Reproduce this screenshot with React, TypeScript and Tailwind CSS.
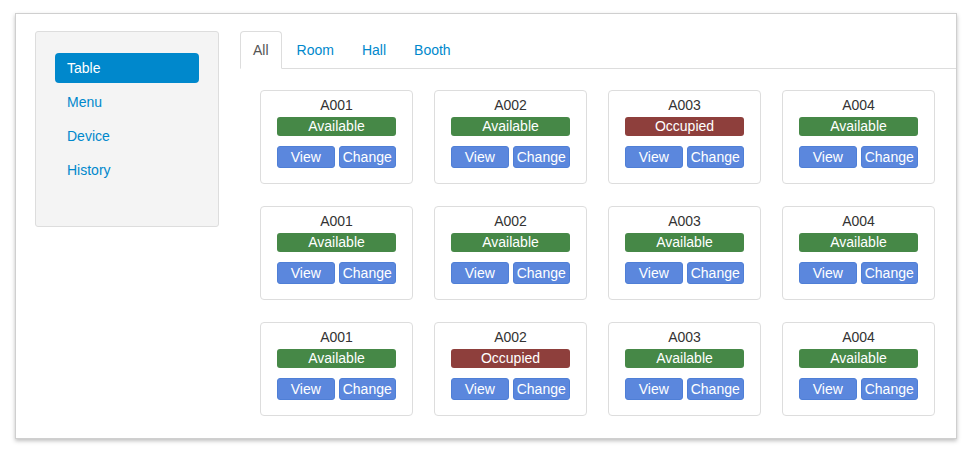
import { useState } from "react";

type Table = { code: string; occupied: boolean };

const rows: Table[][] = [
  [
    { code: "A001", occupied: false },
    { code: "A002", occupied: false },
    { code: "A003", occupied: true },
    { code: "A004", occupied: false },
  ],
  [
    { code: "A001", occupied: false },
    { code: "A002", occupied: false },
    { code: "A003", occupied: false },
    { code: "A004", occupied: false },
  ],
  [
    { code: "A001", occupied: false },
    { code: "A002", occupied: true },
    { code: "A003", occupied: false },
    { code: "A004", occupied: false },
  ],
];

const navItems = ["Table", "Menu", "Device", "History"];
const tabs = ["All", "Room", "Hall", "Booth"];

function TableCard({ table }: { table: Table }) {
  return (
    <div className="w-[153px] h-[94px] border border-[#dddddd] rounded-[4px] bg-white pt-[4px] px-[16px] flex flex-col">
      <div className="h-[20px] leading-[20px] text-center text-[14px] text-[#333333]">
        {table.code}
      </div>
      <div
        className={
          table.occupied
            ? "mt-[2px] h-[19px] leading-[19px] rounded-[3px] bg-[#8e3f3c] text-white text-center text-[14px]"
            : "mt-[2px] h-[19px] leading-[19px] rounded-[3px] bg-[#468847] text-white text-center text-[14px]"
        }
      >
        {table.occupied ? "Occupied" : "Available"}
      </div>
      <div className="mt-[10px] flex gap-[4px] h-[22px]">
        <button
          type="button"
          className="flex-1 h-full rounded-[3px] border border-[#4f7fd6] bg-[#5b87dd] text-white text-[14px] leading-[20px]"
        >
          View
        </button>
        <button
          type="button"
          className="flex-1 h-full rounded-[3px] border border-[#4f7fd6] bg-[#5b87dd] text-white text-[14px] leading-[20px]"
        >
          Change
        </button>
      </div>
    </div>
  );
}

export default function App() {
  const [activeNav, setActiveNav] = useState("Table");
  const [activeTab, setActiveTab] = useState("All");

  return (
    <div className="w-[971px] h-[454px] bg-white pt-[13px] pl-[15px] [font-family:'Liberation_Sans',Arial,sans-serif]">
      <div className="w-[942px] h-[426px] border border-[#cfcfcf] shadow-[0_2px_4px_rgba(0,0,0,0.25)] bg-white flex pt-[17px] pl-[19px]">
        {/* sidebar */}
        <aside className="w-[184px] h-[196px] shrink-0 border border-[#dddddd] rounded-[3px] bg-[#f4f4f4] pt-[21px] px-[19px] flex flex-col gap-[4px]">
          {navItems.map((item) => (
            <button
              key={item}
              type="button"
              onClick={() => setActiveNav(item)}
              className={
                item === activeNav
                  ? "h-[30px] rounded-[4px] bg-[#0088cc] text-white text-left pl-[12px] text-[14px]"
                  : "h-[30px] rounded-[4px] text-[#0088cc] text-left pl-[12px] text-[14px]"
              }
            >
              {item}
            </button>
          ))}
        </aside>

        {/* main */}
        <section className="flex-1 ml-[21px]">
          <div className="flex h-[38px] border-b border-[#dddddd]">
            {tabs.map((tab) => (
              <button
                key={tab}
                type="button"
                onClick={() => setActiveTab(tab)}
                className={
                  tab === activeTab
                    ? "h-[38px] -mb-px mr-[2px] px-[12px] border border-[#dddddd] border-b-white rounded-t-[4px] bg-white text-[#555555] text-[14px]"
                    : "h-[38px] -mb-px mr-[2px] px-[12px] border border-transparent text-[#0088cc] text-[14px]"
                }
              >
                {tab}
              </button>
            ))}
          </div>

          <div className="pl-[20px] pt-[21px] flex flex-col gap-[22px]">
            {rows.map((row, i) => (
              <div key={i} className="flex gap-[21px]">
                {row.map((table, j) => (
                  <TableCard key={j} table={table} />
                ))}
              </div>
            ))}
          </div>
        </section>
      </div>
    </div>
  );
}
